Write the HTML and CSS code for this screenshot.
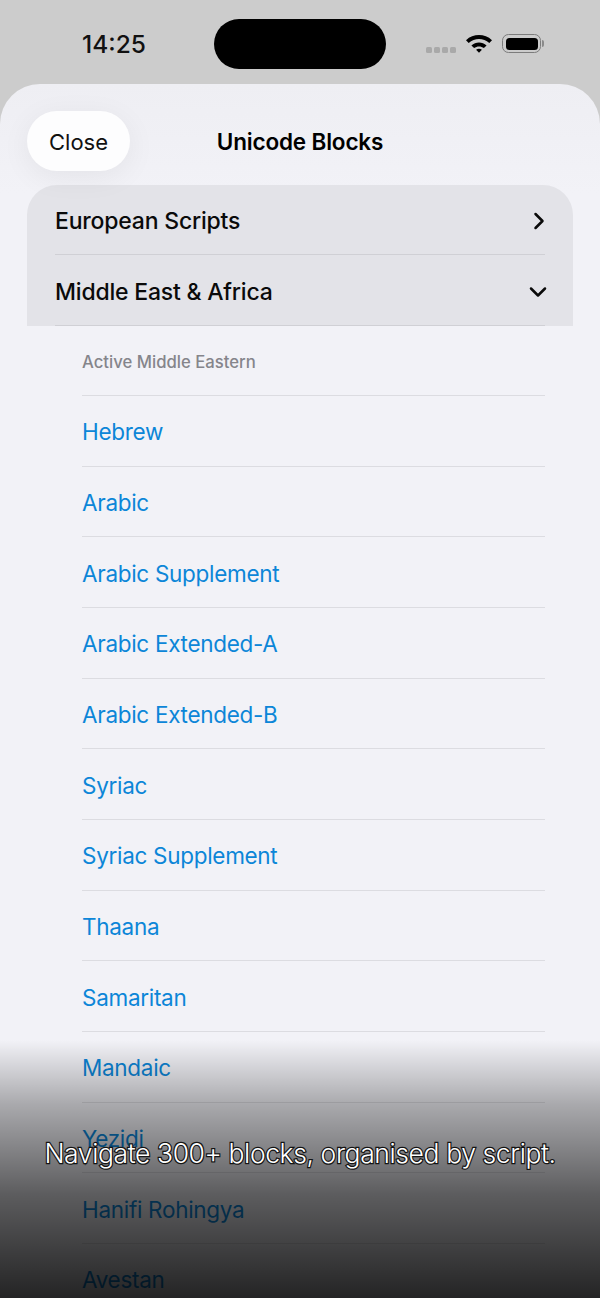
FILE: index.html
```html
<!DOCTYPE html>
<html lang="en">

<head>
    <meta charset="UTF-8" />
    <meta name="viewport" content="width=device-width, initial-scale=1.0" />
    <title>Unicode Blocks</title>
    <link rel="stylesheet" href="styles.css">
</head>

<body>
    <div class="status-bar">
        <span class="time">14:25</span>
        <div class="island"></div>
        <div class="status-icons">
            <div class="signal"><i></i><i></i><i></i><i></i></div>
            <svg class="wifi" width="28" height="20" viewBox="0 0 28 20">
                <path d="M1 7.200C8.400 .4 19.600 .4 27 7.200L24.300 10C18.400 4.800 9.600 4.800 3.700 10Z" />
                <path d="M6.400 12.400C10.800 8.500 17.200 8.500 21.600 12.400L18.900 15.100C16 12.800 12 12.800 9.100 15.100Z" />
                <path d="M11.100 16.800C12.900 15.500 15.100 15.500 16.900 16.800L14 19.800Z" />
            </svg>
            <div class="battery"><div class="battery-fill"></div></div>
            <div class="battery-cap"></div>
        </div>
    </div>

    <div class="sheet">
        <div class="sheet-header">
            <button class="close-btn">Close</button>
            <h1>Unicode Blocks</h1>
        </div>

        <div class="group">
            <div class="group-row">
                <span>European Scripts</span>
                <svg class="chevron" width="14" height="20" viewBox="0 0 14 20">
                    <path d="M3.500 3L10.500 10L3.500 17" />
                </svg>
            </div>
            <div class="group-row">
                <span>Middle East &amp; Africa</span>
                <svg class="chevron chevron-down" width="20" height="14" viewBox="0 0 20 14">
                    <path d="M3 3.500L10 10.500L17 3.500" />
                </svg>
            </div>
        </div>

        <ul class="block-list">
            <li class="list-heading">Active Middle Eastern</li>
            <li>Hebrew</li>
            <li>Arabic</li>
            <li>Arabic Supplement</li>
            <li>Arabic Extended-A</li>
            <li>Arabic Extended-B</li>
            <li>Syriac</li>
            <li>Syriac Supplement</li>
            <li>Thaana</li>
            <li>Samaritan</li>
            <li>Mandaic</li>
            <li>Yezidi</li>
            <li>Hanifi Rohingya</li>
            <li>Avestan</li>
        </ul>
    </div>

    <!-- Caption over the bottom fade -->
    <div class="fade">
        <p class="caption">Navigate 300+ blocks, organised by script.</p>
    </div>
</body>

</html>
```

FILE: styles.css
```css
* {
    margin: 0;
    padding: 0;
    box-sizing: border-box;
}

html,
body {
    height: 1298px;
    overflow: hidden;
}

body {
    position: relative;
    background-color: #cccccc;
    font-family: Inter, 'Noto Sans', sans-serif;
    color: #000000;
}

.status-bar {
    height: 84px;
    position: relative;
    display: flex;
    justify-content: space-between;
    padding: 0 56px 0 82px;
}

.time {
    margin-top: 29px;
    font-size: 24.500px;
    line-height: 30px;
    font-weight: 500;
    color: #111;
}

.island {
    position: absolute;
    top: 19px;
    left: 214px;
    width: 172px;
    height: 50px;
    border-radius: 25px;
    background-color: #000;
}

.status-icons {
    display: flex;
    align-items: flex-start;
    padding-top: 34px;
}

.signal {
    display: flex;
    gap: 2px;
    margin-top: 13px;
    margin-right: 9px;
}

.signal i {
    width: 6px;
    height: 6px;
    border-radius: 1.500px;
    background-color: #a9a9a9;
}

.wifi {
    fill: #000;
    margin-top: -1px;
    margin-right: 9px;
}

.battery {
    width: 39px;
    height: 19px;
    padding: 2.500px;
    border: 1.500px solid #7c7c7c;
    border-radius: 6.500px;
}

.battery-fill {
    height: 100%;
    border-radius: 3.500px;
    background-color: #000;
}

.battery-cap {
    width: 2px;
    height: 7px;
    margin-top: 6px;
    margin-left: 1px;
    border-radius: 0 2px 2px 0;
    background-color: #8a8a8a;
}

.sheet {
    height: 1214px;
    border-radius: 40px 40px 0 0;
    background: linear-gradient(to bottom, #eeeef3, #f2f2f7 110px);
    padding: 27px 27px 0;
}

.sheet-header {
    position: relative;
    height: 60px;
    display: flex;
    align-items: center;
    justify-content: center;
    margin-bottom: 14px;
}

.close-btn {
    position: absolute;
    left: 0;
    top: 0;
    width: 103px;
    height: 60px;
    border: none;
    border-radius: 30px;
    background-color: #fdfdfe;
    box-shadow: 0 6px 30px rgba(0, 0, 0, 0.06);
    font-family: inherit;
    font-size: 22px;
    padding-top: 2px;
    color: #111;
}

h1 {
    font-size: 22.500px;
    font-weight: 600;
    letter-spacing: -0.170px;
}

.group {
    height: 141px;
    border-radius: 30px 30px 0 0;
    background-color: #e3e3e8;
    padding: 0 28px;
}

.group-row {
    height: 70px;
    display: flex;
    align-items: center;
    justify-content: space-between;
    padding-top: 2px;
    border-bottom: 1px solid #d0d0d5;
    font-size: 23px;
    font-weight: 500;
    letter-spacing: -0.200px;
    color: #0a0a0a;
}

.group-row + .group-row {
    height: 71px;
    padding-top: 3px;
}

.chevron {
    fill: none;
    stroke: #0a0a0a;
    stroke-width: 2.500;
    stroke-linecap: round;
    stroke-linejoin: round;
    margin-right: -1px;
}

.chevron-down {
    margin-right: -3px;
}

.block-list {
    list-style: none;
    margin: 0 0 0 55px;
    width: 463px;
}

.block-list li {
    height: 70.670px;
    display: flex;
    align-items: center;
    padding-top: 2px;
    border-bottom: 1px solid #dcdce1;
    font-size: 22.500px;
    letter-spacing: -0.300px;
    color: #0c86d8;
}

.block-list .list-heading {
    height: 70px;
    font-size: 16.700px;
    font-weight: 500;
    letter-spacing: 0;
    color: #85858b;
}

.fade {
    position: absolute;
    left: 0;
    right: 0;
    bottom: 0;
    height: 258px;
    background: linear-gradient(to bottom, rgba(0, 0, 0, 0), rgba(0, 0, 0, 0.3) 25%, rgba(0, 0, 0, 0.62) 60%, rgba(0, 0, 0, 0.85));
}

.caption {
    position: absolute;
    left: 0;
    right: 0;
    top: 95px;
    text-align: center;
    font-size: 26.500px;
    font-weight: 300;
    line-height: 36px;
    letter-spacing: -0.400px;
    color: #ffffff;
    -webkit-text-stroke: 2.400px #141414;
    paint-order: stroke fill;
}
```
